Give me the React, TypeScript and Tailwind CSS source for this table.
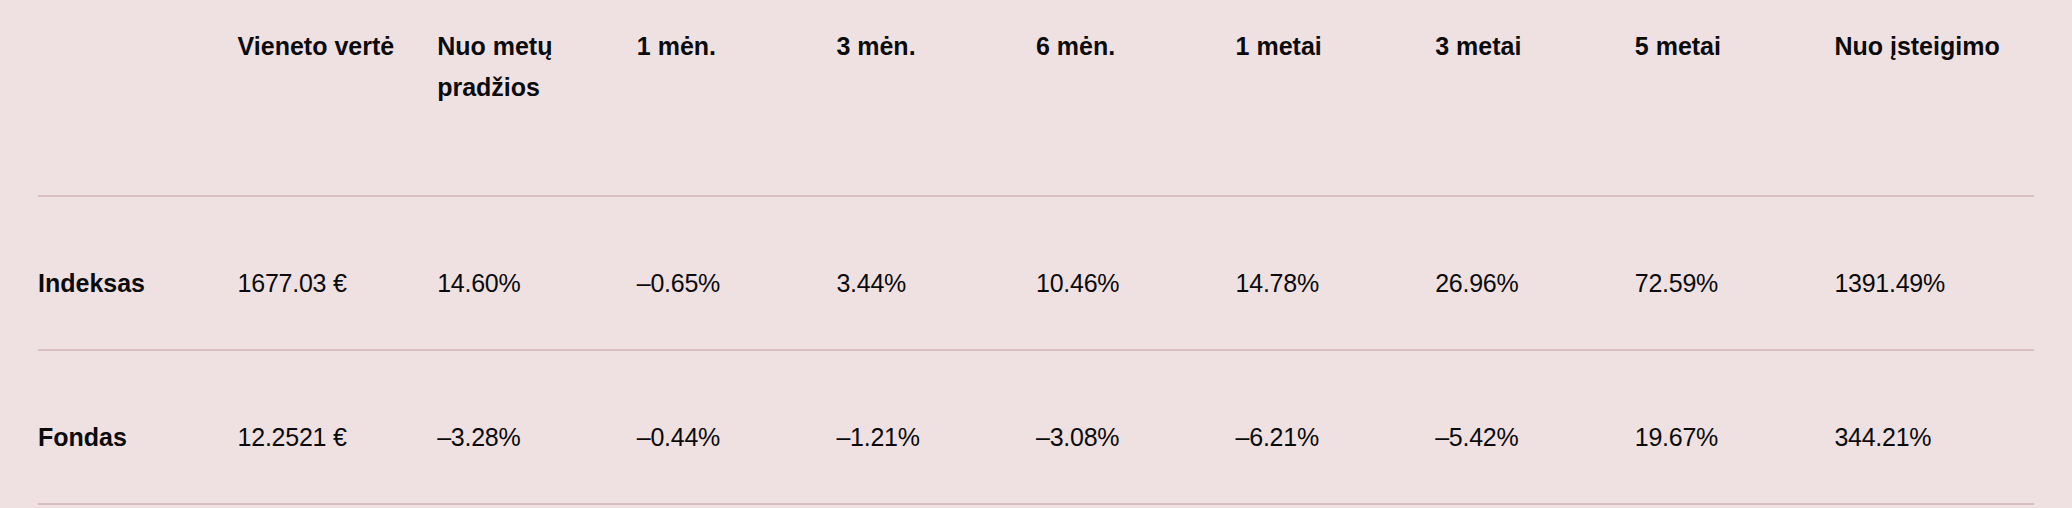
const headers = [
  "",
  "Vieneto vertė",
  "Nuo metų pradžios",
  "1 mėn.",
  "3 mėn.",
  "6 mėn.",
  "1 metai",
  "3 metai",
  "5 metai",
  "Nuo įsteigimo",
];

const rows = [
  {
    name: "Indeksas",
    values: ["1677.03 €", "14.60%", "–0.65%", "3.44%", "10.46%", "14.78%", "26.96%", "72.59%", "1391.49%"],
  },
  {
    name: "Fondas",
    values: ["12.2521 €", "–3.28%", "–0.44%", "–1.21%", "–3.08%", "–6.21%", "–5.42%", "19.67%", "344.21%"],
  },
];

export default function App() {
  return (
    <div
      className="min-h-[508px] bg-[#efe1e2] px-[38px] text-[#0b0b0b]"
      style={{ fontFamily: '"Liberation Sans", Arial, sans-serif' }}
    >
      {/* Header */}
      <div className="grid h-[197px] grid-cols-10 border-b-2 border-[#d9bfc1] pt-[26px]">
        {headers.map((h, i) => (
          <div key={i} className="pr-6 text-[25px] font-bold leading-[41px]">
            {h}
          </div>
        ))}
      </div>

      {/* Rows */}
      {rows.map((row) => (
        <div
          key={row.name}
          className="grid h-[154px] grid-cols-10 border-b-2 border-[#d9bfc1] pt-[66px] text-[25px] leading-[41px]"
        >
          <div className="font-bold">{row.name}</div>
          {row.values.map((v, i) => (
            <div key={i} className="tracking-[-0.01em]">{v}</div>
          ))}
        </div>
      ))}
    </div>
  );
}
